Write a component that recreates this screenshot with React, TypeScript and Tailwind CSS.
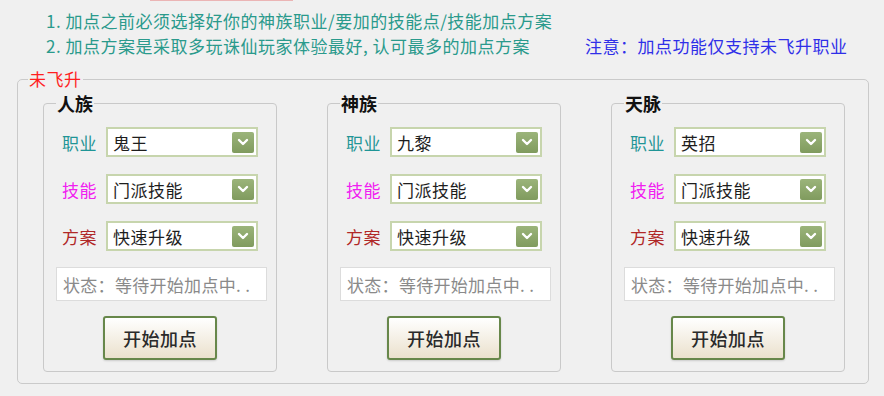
const font = { fontFamily: '"Noto Sans CJK SC", "Noto Sans", sans-serif' }

interface Race {
  name: string
  job: string
}

const races: Race[] = [
  { name: '人族', job: '鬼王' },
  { name: '神族', job: '九黎' },
  { name: '天脉', job: '英招' },
]

function Select({ value }: { value: string }) {
  return (
    <div className="flex h-[30px] w-[152px] items-center justify-between border-2 border-[#c7d5ad] bg-white pl-[5px] pr-[2px]">
      <span className="text-[17px] leading-none tracking-[0.5px] text-[#1e1e1e]">{value}</span>
      <span className="flex h-[21px] w-[22px] items-center justify-center rounded-[2px] bg-gradient-to-b from-[#9bb47a] to-[#809b5e]">
        <svg width="12" height="8" viewBox="0 0 12 8">
          <polyline points="2,2 6,6 10,2" fill="none" stroke="#fff" strokeWidth="2.4" strokeLinecap="round" strokeLinejoin="round" />
        </svg>
      </span>
    </div>
  )
}

function Row({ label, color, value }: { label: string; color: string; value: string }) {
  return (
    <div className="flex items-center gap-[8px] pl-[18px]">
      <span className={`w-[36px] text-[17px] leading-none tracking-[0.5px] ${color}`}>{label}</span>
      <Select value={value} />
    </div>
  )
}

function RaceBox({ race }: { race: Race }) {
  return (
    <fieldset className="w-[234px] rounded-[4px] border border-[#c9c9c9] p-0">
      <legend className="ml-[12px] px-[1px] text-[18px] font-bold leading-[24px] text-[#111]">{race.name}</legend>
      <div className="flex flex-col pb-[11px] pt-[12px]">
        <div className="flex flex-col gap-[17px]">
          <Row label="职业" color="text-[#1f9596]" value={race.job} />
          <Row label="技能" color="text-[#f020f0]" value="门派技能" />
          <Row label="方案" color="text-[#b02828]" value="快速升级" />
        </div>
        <div className="ml-[12px] mt-[16px] flex h-[34px] w-[211px] items-center border border-[#dcdcdc] bg-white pl-[6px]">
          <span className="text-[17px] leading-none tracking-[0.3px] text-[#8a8a8a]">状态：等待开始加点中. .</span>
        </div>
        <button className="mx-auto mt-[15px] flex h-[44px] w-[114px] items-center justify-center rounded-[3px] border-2 border-[#67874a] bg-gradient-to-b from-white to-[#ebe1cd] text-[18px] font-medium tracking-[0.5px] text-[#2a2a2a] shadow-[0_1px_2px_rgba(0,0,0,0.15)]">
          开始加点
        </button>
      </div>
    </fieldset>
  )
}

export default function App() {
  return (
    <div className="h-[396px] w-[884px] overflow-hidden bg-[#f0f0f0]" style={font}>
      <div className="ml-[150px] h-[1px] w-[143px] bg-[#ebb5b5]" />
      <div className="pl-[46px] pt-[7px] text-[17px] leading-[25px] tracking-[0.5px] text-[#2a9a8c]">
        <div>1. 加点之前必须选择好你的神族职业/要加的技能点/技能加点方案</div>
        <div className="flex">
          <span className="w-[539px]">2. 加点方案是采取多玩诛仙玩家体验最好, 认可最多的加点方案</span>
          <span className="text-[#2f2fe8]">注意：加点功能仅支持未飞升职业</span>
        </div>
      </div>
      <fieldset className="ml-[17px] mt-[10px] w-[852px] rounded-[5px] border border-[#cacaca] p-0">
        <legend className="ml-[10px] px-[1px] text-[17px] leading-[22px] tracking-[0.5px] text-[#ff1f1f]">未飞升</legend>
        <div className="flex gap-[50px] pb-[11px] pl-[25px] pt-[1px]">
          {races.map((r) => (
            <RaceBox key={r.name} race={r} />
          ))}
        </div>
      </fieldset>
    </div>
  )
}
